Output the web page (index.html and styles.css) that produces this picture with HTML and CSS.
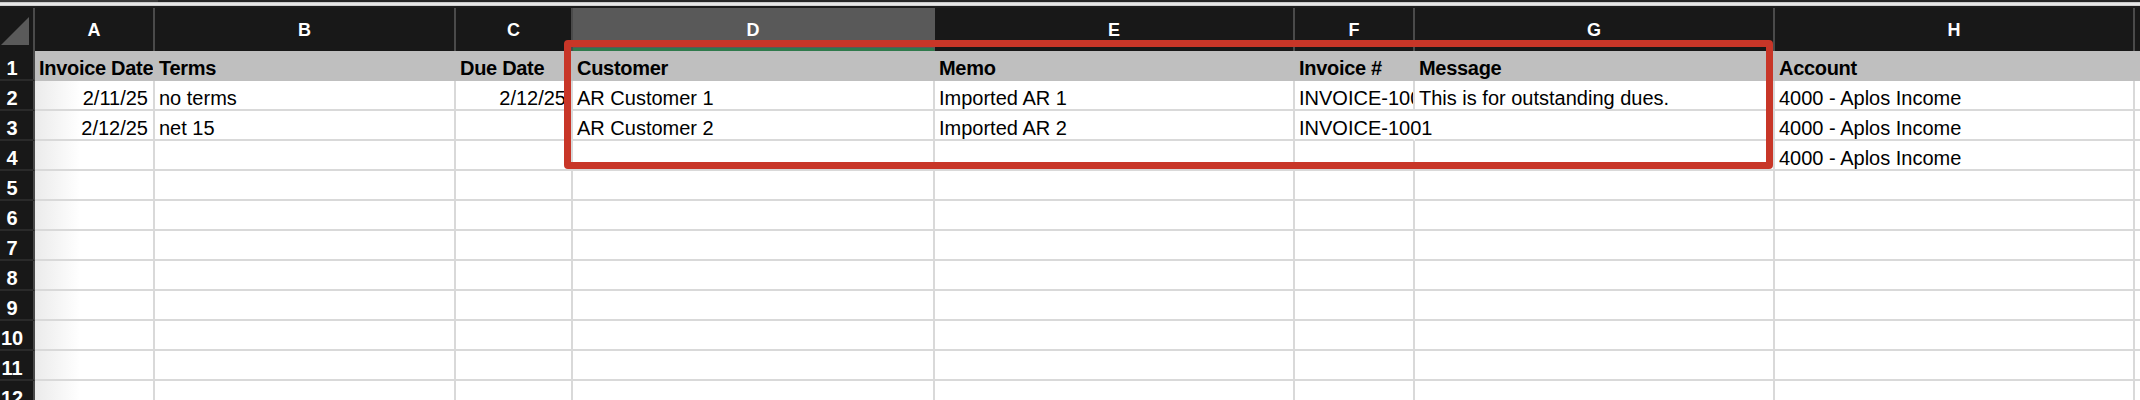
FILE: index.html
```html
<!DOCTYPE html>
<html lang="en">
<head>
<meta charset="utf-8">
<title>Invoices</title>
<link rel="stylesheet" href="styles.css">
</head>
<body>
<div class="app">
  <div class="topbar"><div class="topbar-tab"></div></div>
  <div class="sheet">
    <div class="corner"><svg width="33" height="43" viewBox="0 0 33 43"><polygon points="1,37 29,9 29,37" fill="#5a5a5a"/></svg></div>
    <div class="colhead">A</div>
    <div class="colhead">B</div>
    <div class="colhead">C</div>
    <div class="colhead sel">D</div>
    <div class="colhead">E</div>
    <div class="colhead">F</div>
    <div class="colhead">G</div>
    <div class="colhead">H</div>
    <div class="colhead"></div>

    <div class="rowhead">1</div>
    <div class="cell hdr">Invoice Date</div>
    <div class="cell hdr">Terms</div>
    <div class="cell hdr">Due Date</div>
    <div class="cell hdr">Customer</div>
    <div class="cell hdr">Memo</div>
    <div class="cell hdr">Invoice #</div>
    <div class="cell hdr">Message</div>
    <div class="cell hdr">Account</div>
    <div class="cell hdr"></div>

    <div class="rowhead">2</div>
    <div class="cell cola num">2/11/25</div>
    <div class="cell">no terms</div>
    <div class="cell num">2/12/25</div>
    <div class="cell">AR Customer 1</div>
    <div class="cell">Imported AR 1</div>
    <div class="cell">INVOICE-1001</div>
    <div class="cell">This is for outstanding dues.</div>
    <div class="cell">4000 - Aplos Income</div>
    <div class="cell"></div>

    <div class="rowhead">3</div>
    <div class="cell cola num">2/12/25</div>
    <div class="cell">net 15</div>
    <div class="cell"></div>
    <div class="cell">AR Customer 2</div>
    <div class="cell">Imported AR 2</div>
    <div class="cell spill">INVOICE-1001</div>
    <div class="cell"></div>
    <div class="cell">4000 - Aplos Income</div>
    <div class="cell"></div>

    <div class="rowhead">4</div>
    <div class="cell cola"></div><div class="cell"></div><div class="cell"></div><div class="cell"></div><div class="cell"></div><div class="cell"></div><div class="cell"></div>
    <div class="cell">4000 - Aplos Income</div>
    <div class="cell"></div>

    <div class="rowhead">5</div>
    <div class="cell cola"></div><div class="cell"></div><div class="cell"></div><div class="cell"></div><div class="cell"></div><div class="cell"></div><div class="cell"></div><div class="cell"></div><div class="cell"></div>
    <div class="rowhead">6</div>
    <div class="cell cola"></div><div class="cell"></div><div class="cell"></div><div class="cell"></div><div class="cell"></div><div class="cell"></div><div class="cell"></div><div class="cell"></div><div class="cell"></div>
    <div class="rowhead">7</div>
    <div class="cell cola"></div><div class="cell"></div><div class="cell"></div><div class="cell"></div><div class="cell"></div><div class="cell"></div><div class="cell"></div><div class="cell"></div><div class="cell"></div>
    <div class="rowhead">8</div>
    <div class="cell cola"></div><div class="cell"></div><div class="cell"></div><div class="cell"></div><div class="cell"></div><div class="cell"></div><div class="cell"></div><div class="cell"></div><div class="cell"></div>
    <div class="rowhead">9</div>
    <div class="cell cola"></div><div class="cell"></div><div class="cell"></div><div class="cell"></div><div class="cell"></div><div class="cell"></div><div class="cell"></div><div class="cell"></div><div class="cell"></div>
    <div class="rowhead">10</div>
    <div class="cell cola"></div><div class="cell"></div><div class="cell"></div><div class="cell"></div><div class="cell"></div><div class="cell"></div><div class="cell"></div><div class="cell"></div><div class="cell"></div>
    <div class="rowhead">11</div>
    <div class="cell cola"></div><div class="cell"></div><div class="cell"></div><div class="cell"></div><div class="cell"></div><div class="cell"></div><div class="cell"></div><div class="cell"></div><div class="cell"></div>
    <div class="rowhead">12</div>
    <div class="cell cola"></div><div class="cell"></div><div class="cell"></div><div class="cell"></div><div class="cell"></div><div class="cell"></div><div class="cell"></div><div class="cell"></div><div class="cell"></div>
  </div>
  <div class="callout"></div>
</div>
</body>
</html>
```

FILE: styles.css
```css
* { box-sizing: border-box; }
html, body { margin: 0; padding: 0; }
body {
  background: #fff;
  font-family: "Liberation Sans", Arial, sans-serif;
  width: 2140px;
  height: 400px;
  overflow: hidden;
}
.app { position: relative; }
.topbar {
  height: 8px;
  background: linear-gradient(to bottom, #262626 0, #262626 2px, #bdbdbd 2px, #f4f4f4 4px, #c4c4c4 6px, #1c1c1c 6px, #1c1c1c 8px);
}
.topbar-tab {
  width: 158px;
  height: 2px;
  background: #3a3a3a;
}
.sheet {
  display: grid;
  grid-template-columns: 35px 120px 301px 117px 362px 360px 120px 360px 360px 1fr;
  grid-template-rows: 43px;
  grid-auto-rows: 30px;
}
.corner {
  background: #181818;
  border-right: 2px solid #4a4a4a;
}
.corner svg { display: block; }
.colhead {
  background: #181818;
  color: #fff;
  font-weight: bold;
  font-size: 18px;
  line-height: 20px;
  padding-top: 12px;
  text-align: center;
  border-right: 2px solid #4a4a4a;
}
.colhead.sel {
  background: #595959;
  border-right-color: #595959;
  border-bottom: 3px solid #2f7a4c;
}
.rowhead {
  background: #181818;
  color: #fff;
  font-weight: bold;
  font-size: 20px;
  line-height: 22px;
  padding: 6px 9px 0 0;
  text-align: center;
  border-right: 2px solid #4a4a4a;
  border-bottom: 2px solid #2a2a2a;
}
.cell {
  font-size: 20px;
  line-height: 22px;
  padding: 6px 4px 0;
  white-space: nowrap;
  overflow: hidden;
  color: #000;
  border-right: 2px solid #d9d9d9;
  border-bottom: 2px solid #d9d9d9;
}
.hdr {
  background: #bfbfbf;
  border-color: #bfbfbf;
  font-weight: bold;
  letter-spacing: -0.3px;
}
.num {
  text-align: right;
  padding-right: 5px;
}
.cola {
  background: linear-gradient(to right, #ebebeb, #fff 45px);
}
.spill {
  overflow: visible;
  border-right-color: transparent;
}
.callout {
  position: absolute;
  left: 564px;
  top: 40px;
  width: 1209px;
  height: 129px;
  border: 7px solid #c83628;
  border-radius: 4px;
  pointer-events: none;
}
```
